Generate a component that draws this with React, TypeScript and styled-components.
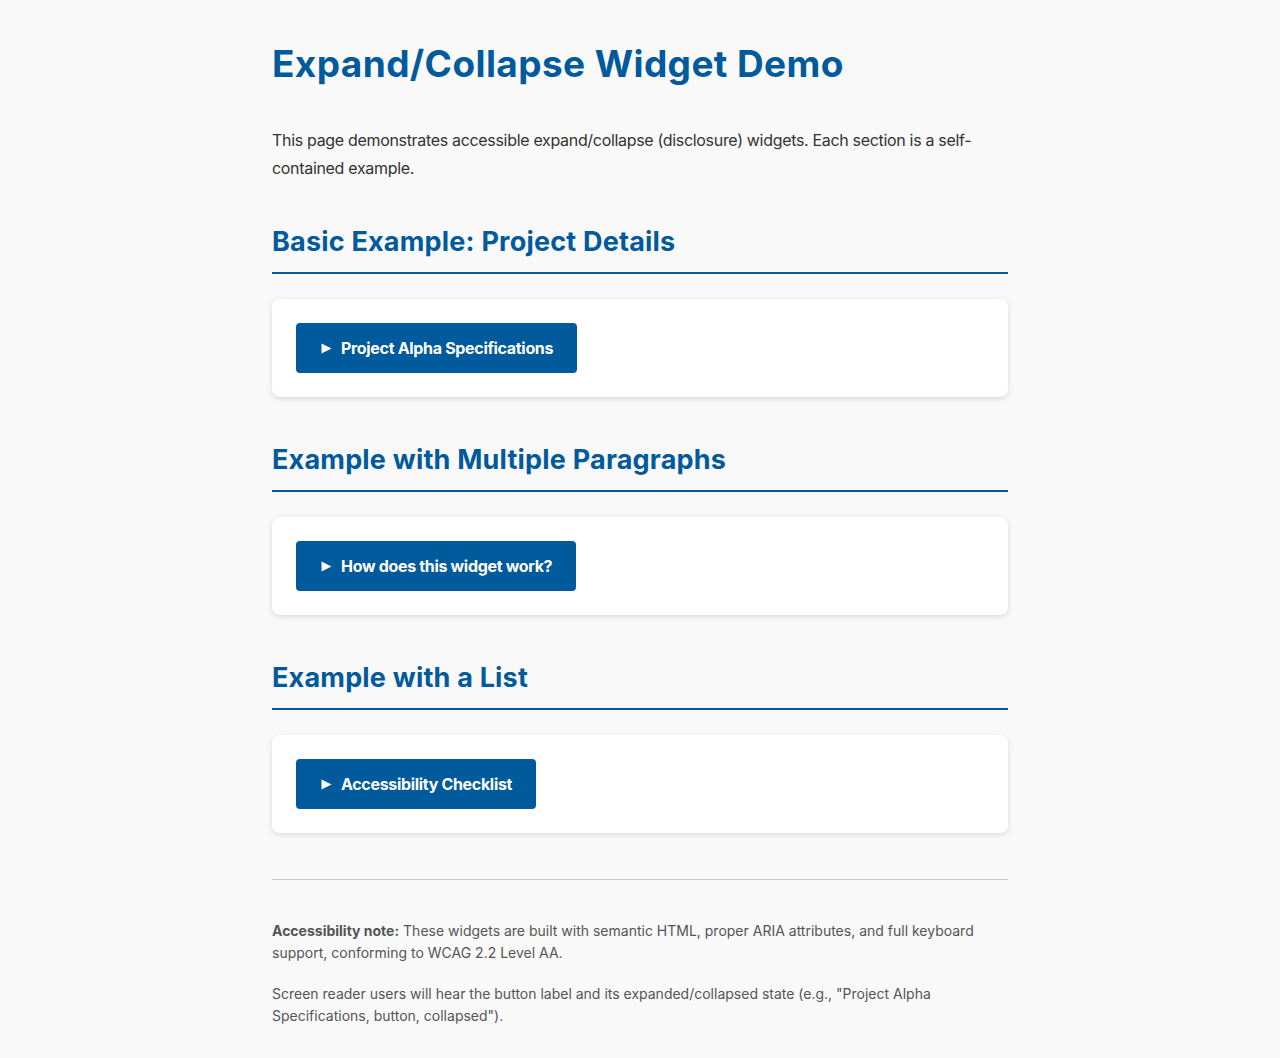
import React from "react";
import styled, { createGlobalStyle } from "styled-components";

const Global = createGlobalStyle`
  html, body { margin: 0; padding: 0; }
  body {
    background: #f9f9f9;
    color: #333;
    font-family: Inter, "Noto Sans", "Liberation Sans", sans-serif;
  }
`;

const Page = styled.main`
  max-width: 736px;
  margin: 0 auto;
  padding: 42px 32px 24px;
`;

const Title = styled.h1`
  margin: 0 0 40px;
  font-size: 37px;
  line-height: 44px;
  font-weight: 700;
  letter-spacing: 0.4px;
  color: #005a9c;
`;

const Intro = styled.p`
  margin: 0 0 43px;
  font-size: 16px;
  line-height: 28px;
  letter-spacing: -0.32px;
  color: #333;
`;

const Section = styled.section`
  margin-bottom: 46px;
`;

const SectionTitle = styled.h2`
  margin: 0 0 25px;
  padding-bottom: 13px;
  border-bottom: 2px solid #005a9c;
  font-size: 27px;
  line-height: 34px;
  font-weight: 700;
  letter-spacing: 0.2px;
  color: #005a9c;
`;

const Card = styled.div`
  background: #fff;
  border-radius: 8px;
  padding: 24px;
  box-shadow: 0 2px 6px rgba(0, 0, 0, 0.12);
`;

const Toggle = styled.button`
  display: inline-flex;
  align-items: center;
  gap: 9px;
  background: #005a9c;
  color: #fff;
  border: none;
  border-radius: 4px;
  padding: 12px 24px 12px 25px;
  font-family: inherit;
  font-size: 16px;
  line-height: 26px;
  font-weight: 700;
  letter-spacing: -0.32px;
  cursor: pointer;
`;

const Footer = styled.footer`
  border-top: 1px solid #ccc;
  margin-top: 1px;
  padding-top: 40px;
`;

const Note = styled.p`
  margin: 0 0 18px;
  font-size: 14px;
  line-height: 22.4px;
  color: #555;
  strong { font-weight: 700; }
`;

const Arrow = () => (
  <svg width="11" height="11" viewBox="0 0 11 11" aria-hidden="true">
    <path d="M0.5 0.5 L10.5 5.5 L0.5 10.5 Z" fill="#fff" />
  </svg>
);

const sections = [
  { title: "Basic Example: Project Details", label: "Project Alpha Specifications" },
  { title: "Example with Multiple Paragraphs", label: "How does this widget work?" },
  { title: "Example with a List", label: "Accessibility Checklist" },
];

export default function App() {
  return (
    <>
      <Global />
      <Page>
        <Title>Expand/Collapse Widget Demo</Title>
        <Intro>
          This page demonstrates accessible expand/collapse (disclosure) widgets. Each section is a
          self-contained example.
        </Intro>
        {sections.map((s) => (
          <Section key={s.title}>
            <SectionTitle>{s.title}</SectionTitle>
            <Card>
              <Toggle type="button" aria-expanded={false}>
                <Arrow />
                {s.label}
              </Toggle>
            </Card>
          </Section>
        ))}
        <Footer>
          <Note>
            <strong>Accessibility note:</strong> These widgets are built with semantic HTML, proper
            ARIA attributes, and full keyboard support, conforming to WCAG 2.2 Level AA.
          </Note>
          <Note>
            Screen reader users will hear the button label and its expanded/collapsed state (e.g.,
            "Project Alpha Specifications, button, collapsed").
          </Note>
        </Footer>
      </Page>
    </>
  );
}
